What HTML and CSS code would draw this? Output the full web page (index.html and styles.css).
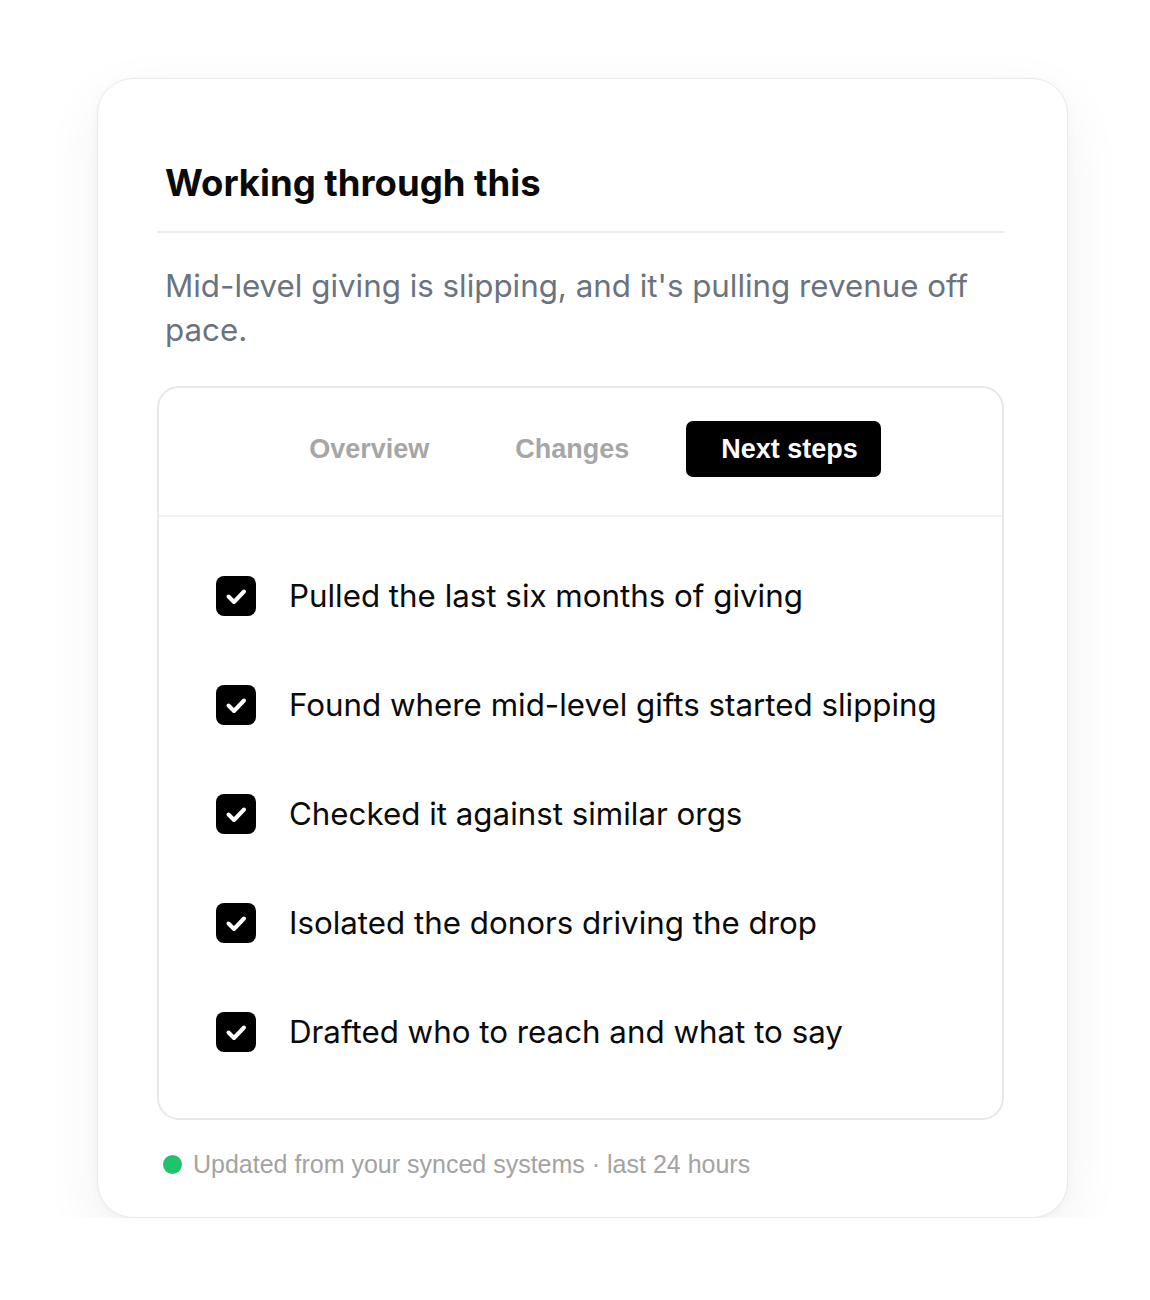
FILE: index.html
```html
<!DOCTYPE html>
<html lang="en">
<head>
<meta charset="utf-8">
<title>Working through this</title>
<link rel="stylesheet" href="styles.css">
</head>
<body>
<div class="card">
  <h1 class="title">Working through this</h1>
  <p class="summary">Mid-level giving is slipping, and it's pulling revenue off pace.</p>
  <div class="panel">
    <div class="tabs">
      <button class="tab">Overview</button>
      <button class="tab">Changes</button>
      <button class="tab active">Next steps</button>
    </div>
    <ul class="steps">
      <li class="step"><span class="check"><svg viewBox="0 0 40 40" width="40" height="40"><path d="M12.5 20.5l5.5 5.5 10-10.5" fill="none" stroke="#fff" stroke-width="4" stroke-linecap="round" stroke-linejoin="round"/></svg></span><span class="step-text">Pulled the last six months of giving</span></li>
      <li class="step"><span class="check"><svg viewBox="0 0 40 40" width="40" height="40"><path d="M12.5 20.5l5.5 5.5 10-10.5" fill="none" stroke="#fff" stroke-width="4" stroke-linecap="round" stroke-linejoin="round"/></svg></span><span class="step-text">Found where mid-level gifts started slipping</span></li>
      <li class="step"><span class="check"><svg viewBox="0 0 40 40" width="40" height="40"><path d="M12.5 20.5l5.5 5.5 10-10.5" fill="none" stroke="#fff" stroke-width="4" stroke-linecap="round" stroke-linejoin="round"/></svg></span><span class="step-text">Checked it against similar orgs</span></li>
      <li class="step"><span class="check"><svg viewBox="0 0 40 40" width="40" height="40"><path d="M12.5 20.5l5.5 5.5 10-10.5" fill="none" stroke="#fff" stroke-width="4" stroke-linecap="round" stroke-linejoin="round"/></svg></span><span class="step-text">Isolated the donors driving the drop</span></li>
      <li class="step"><span class="check"><svg viewBox="0 0 40 40" width="40" height="40"><path d="M12.5 20.5l5.5 5.5 10-10.5" fill="none" stroke="#fff" stroke-width="4" stroke-linecap="round" stroke-linejoin="round"/></svg></span><span class="step-text">Drafted who to reach and what to say</span></li>
    </ul>
  </div>
  <div class="footer"><span class="dot"></span><span>Updated from your synced systems · last 24 hours</span></div>
</div>
</body>
</html>
```
FILE: styles.css
```css
* { box-sizing: border-box; }
html, body { margin: 0; padding: 0; background: #ffffff; }
body { font-family: Inter, "Liberation Sans", sans-serif; color: #0a0a0a; }

.card {
  margin: 78px 0 0 97px;
  width: 971px;
  height: 1140px;
  padding: 82px 63px 0 59px;
  background: #fff;
  border: 1px solid #e9e9ed;
  border-radius: 36px;
  box-shadow: 0 20px 60px rgba(0, 0, 0, 0.06), 0 2px 10px rgba(0, 0, 0, 0.03);
}

.title {
  margin: 0;
  padding: 0 0 26px 8px;
  font-size: 36.5px;
  line-height: 44px;
  font-weight: 700;
  border-bottom: 2px solid #ececef;
}

.summary {
  margin: 0;
  padding: 31px 20px 0 8px;
  font-size: 31.3px;
  line-height: 44px;
  color: #6b7280;
}

.panel {
  margin: 34px 0 0 0;
  border: 2px solid #e8e8ec;
  border-radius: 22px;
  height: 734px;
}

.tabs {
  display: flex;
  justify-content: center;
  gap: 28px;
  padding: 33px 0 38px;
  border-bottom: 2px solid #f3f3f5;
}

.tab {
  height: 56px;
  padding: 0 29px;
  border: none;
  border-radius: 7px;
  background: transparent;
  font-family: "Liberation Sans", Arial, sans-serif;
  font-weight: 700;
  font-size: 27px;
  color: #a6a6a6;
}

.tab.active { background: #000; color: #fff; padding: 0 23px 0 35px; }

.steps {
  list-style: none;
  margin: 0;
  padding: 59px 0 0 57px;
  display: flex;
  flex-direction: column;
  gap: 69px;
}

.step { display: flex; align-items: center; gap: 33px; }

.check {
  width: 40px;
  height: 40px;
  border-radius: 8px;
  background: #000;
  display: flex;
  flex: none;
}

.step-text { font-size: 31.3px; line-height: 40px; color: #0a0a0a; }

.footer {
  display: flex;
  align-items: center;
  gap: 11px;
  margin: 30px 0 0 6px;
  font-family: "Liberation Sans", Arial, sans-serif;
  font-size: 25px;
  color: #a3a3a3;
}

.dot { width: 19px; height: 19px; border-radius: 50%; background: #1ec46b; flex: none; }
```
